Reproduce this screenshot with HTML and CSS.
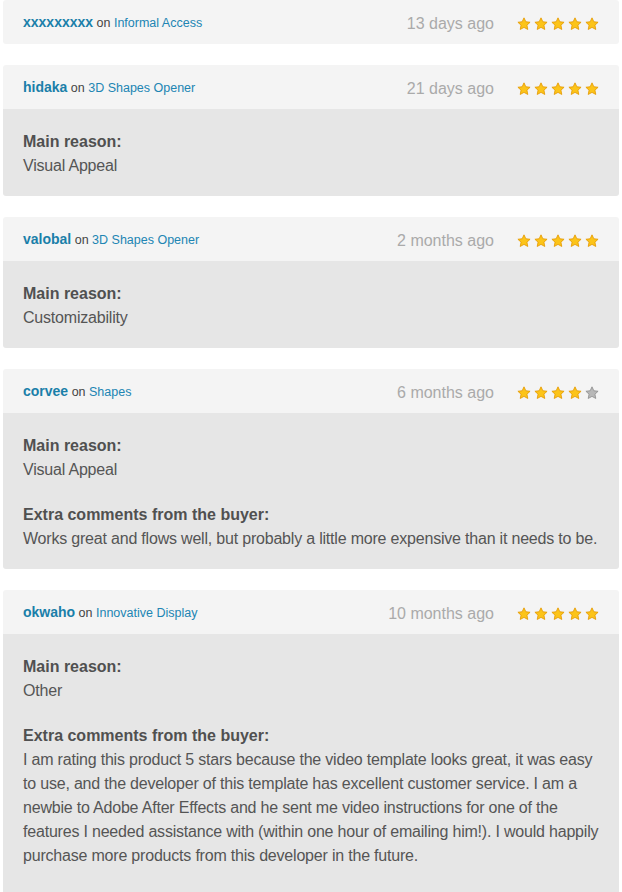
FILE: index.html
```html
<!DOCTYPE html>
<html>
<head>
<meta charset="utf-8">
<link rel="stylesheet" href="styles.css">
</head>
<body>
<svg width="0" height="0" class="defs">
  <defs>
    <symbol id="star" viewBox="0 0 20 20">
      <path d="M10 1.2l2.6 5.6 6.1.7-4.5 4.2 1.2 6.1L10 14.8l-5.4 3 1.2-6.1L1.3 7.5l6.1-.7z"/>
    </symbol>
  </defs>
</svg>
<div class="list">
  <div class="review">
    <div class="head">
      <div class="who"><a class="user">xxxxxxxxx</a> on <a class="item">Informal Access</a></div>
      <div class="when">13 days ago</div>
      <div class="stars"><svg class="s on"><use href="#star"/></svg><svg class="s on"><use href="#star"/></svg><svg class="s on"><use href="#star"/></svg><svg class="s on"><use href="#star"/></svg><svg class="s on"><use href="#star"/></svg></div>
    </div>
  </div>
  <div class="review">
    <div class="head">
      <div class="who"><a class="user">hidaka</a> on <a class="item">3D Shapes Opener</a></div>
      <div class="when">21 days ago</div>
      <div class="stars"><svg class="s on"><use href="#star"/></svg><svg class="s on"><use href="#star"/></svg><svg class="s on"><use href="#star"/></svg><svg class="s on"><use href="#star"/></svg><svg class="s on"><use href="#star"/></svg></div>
    </div>
    <div class="body">
      <p><strong>Main reason:</strong><br>Visual Appeal</p>
    </div>
  </div>
  <div class="review">
    <div class="head">
      <div class="who"><a class="user">valobal</a> on <a class="item">3D Shapes Opener</a></div>
      <div class="when">2 months ago</div>
      <div class="stars"><svg class="s on"><use href="#star"/></svg><svg class="s on"><use href="#star"/></svg><svg class="s on"><use href="#star"/></svg><svg class="s on"><use href="#star"/></svg><svg class="s on"><use href="#star"/></svg></div>
    </div>
    <div class="body">
      <p><strong>Main reason:</strong><br>Customizability</p>
    </div>
  </div>
  <div class="review">
    <div class="head">
      <div class="who"><a class="user">corvee</a> on <a class="item">Shapes</a></div>
      <div class="when">6 months ago</div>
      <div class="stars"><svg class="s on"><use href="#star"/></svg><svg class="s on"><use href="#star"/></svg><svg class="s on"><use href="#star"/></svg><svg class="s on"><use href="#star"/></svg><svg class="s off"><use href="#star"/></svg></div>
    </div>
    <div class="body">
      <p><strong>Main reason:</strong><br>Visual Appeal</p>
      <p><strong>Extra comments from the buyer:</strong><br>Works great and flows well, but probably a little more expensive than it needs to be.</p>
    </div>
  </div>
  <div class="review">
    <div class="head">
      <div class="who"><a class="user">okwaho</a> on <a class="item">Innovative Display</a></div>
      <div class="when">10 months ago</div>
      <div class="stars"><svg class="s on"><use href="#star"/></svg><svg class="s on"><use href="#star"/></svg><svg class="s on"><use href="#star"/></svg><svg class="s on"><use href="#star"/></svg><svg class="s on"><use href="#star"/></svg></div>
    </div>
    <div class="body">
      <p><strong>Main reason:</strong><br>Other</p>
      <p><strong>Extra comments from the buyer:</strong><br>I am rating this product 5 stars because the video template looks great, it was easy to use, and the developer of this template has excellent customer service. I am a newbie to Adobe After Effects and he sent me video instructions for one of the features I needed assistance with (within one hour of emailing him!). I would happily purchase more products from this developer in the future.</p>
    </div>
  </div>
</div>
</body>
</html>
```
FILE: styles.css
```css
html, body {
  margin: 0;
  padding: 0;
  background: #ffffff;
}
body {
  font-family: "Liberation Sans", Arial, sans-serif;
  color: #555555;
}
.defs {
  position: absolute;
  width: 0;
  height: 0;
}
.list {
  display: flex;
  flex-direction: column;
  gap: 21px;
  padding: 0 3px;
}
.review {
  border-radius: 3px;
  overflow: hidden;
}
.head {
  display: flex;
  align-items: center;
  height: 44px;
  padding: 0 20px;
  background: #f4f4f4;
}
.who {
  flex: 1;
  font-size: 12.5px;
  color: #444444;
}
.user {
  font-weight: bold;
  font-size: 14px;
  color: #1a7fa9;
}
.item {
  color: #2185b3;
}
.when {
  font-size: 16px;
  color: #aaaaaa;
  margin-right: 23px;
  padding-top: 4px;
}
.stars {
  display: flex;
  gap: 3px;
  padding-top: 3px;
}
.s {
  width: 14px;
  height: 14px;
}
.s.on {
  fill: #fcc419;
  stroke: #e59a00;
  stroke-width: 1.2;
}
.s.off {
  fill: #b8b8b8;
  stroke: #8f8f8f;
  stroke-width: 1.2;
}
.body {
  background: #e6e6e6;
  padding: 21px 14px 18px 20px;
  font-size: 16px;
  line-height: 24px;
  color: #555555;
  letter-spacing: -0.2px;
}
.review:last-child .body {
  padding-bottom: 30px;
}
.body p {
  margin: 0 0 21px;
}
.body p:last-child {
  margin-bottom: 0;
}
.body strong {
  color: #505050;
  letter-spacing: 0;
}
```
